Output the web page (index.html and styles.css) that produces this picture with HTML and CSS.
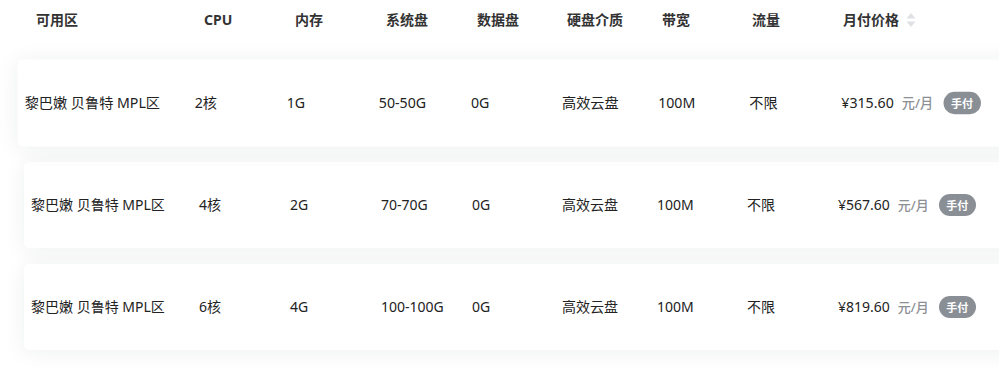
FILE: index.html
```html
<!DOCTYPE html>
<html lang="zh-CN">
<head>
<meta charset="utf-8">
<title>价格表</title>
<link rel="stylesheet" href="styles.css">
</head>
<body>
<div class="table">
  <div class="thead">
    <div class="th">可用区</div>
    <div class="th">CPU</div>
    <div class="th">内存</div>
    <div class="th">系统盘</div>
    <div class="th">数据盘</div>
    <div class="th">硬盘介质</div>
    <div class="th">带宽</div>
    <div class="th">流量</div>
    <div class="th th-sort">月付价格
      <svg class="sort" width="10" height="16" viewBox="0 0 10 16"><path d="M5 1 L9.5 6.5 H0.5 Z" fill="#dfe1e5"/><path d="M5 15 L9.5 9.5 H0.5 Z" fill="#dfe1e5"/></svg>
    </div>
  </div>
  <div class="tbody">
    <div class="row is-hover">
      <div class="td">黎巴嫩 贝鲁特 MPL区</div>
      <div class="td">2核</div>
      <div class="td">1G</div>
      <div class="td">50-50G</div>
      <div class="td">0G</div>
      <div class="td">高效云盘</div>
      <div class="td">100M</div>
      <div class="td">不限</div>
      <div class="td price"><span class="amount">¥315.60</span><span class="unit">元/月</span><span class="badge">手付</span></div>
    </div>
    <div class="row">
      <div class="td">黎巴嫩 贝鲁特 MPL区</div>
      <div class="td">4核</div>
      <div class="td">2G</div>
      <div class="td">70-70G</div>
      <div class="td">0G</div>
      <div class="td">高效云盘</div>
      <div class="td">100M</div>
      <div class="td">不限</div>
      <div class="td price"><span class="amount">¥567.60</span><span class="unit">元/月</span><span class="badge">手付</span></div>
    </div>
    <div class="row">
      <div class="td">黎巴嫩 贝鲁特 MPL区</div>
      <div class="td">6核</div>
      <div class="td">4G</div>
      <div class="td">100-100G</div>
      <div class="td">0G</div>
      <div class="td">高效云盘</div>
      <div class="td">100M</div>
      <div class="td">不限</div>
      <div class="td price"><span class="amount">¥819.60</span><span class="unit">元/月</span><span class="badge">手付</span></div>
    </div>
  </div>
</div>
</body>
</html>
```
FILE: styles.css
```css
html, body {
  margin: 0;
  padding: 0;
  background: #fff;
  overflow: hidden;
}
body {
  font-family: "Noto Sans", "Noto Sans CJK SC", sans-serif;
  font-size: 14px;
  color: #333;
}
.table {
  width: 100%;
  overflow: hidden;
}
.thead, .row {
  display: grid;
  grid-template-columns: 168px 91px 91px 91px 90px 95px 90px 91px 1fr;
  width: 1076px;
}
.thead {
  height: 40px;
  margin-left: 29px;
  align-items: center;
  font-weight: 700;
  color: #333;
}
.th, .td {
  padding-left: 7px;
  line-height: 20px;
  white-space: nowrap;
}
.th-sort {
  display: flex;
  align-items: center;
  gap: 7px;
}
.sort { display: block; }
.tbody {
  display: flex;
  flex-direction: column;
  gap: 16px;
  padding: 20px 0 24px 24px;
}
.row {
  height: 86px;
  align-items: center;
  background: #fff;
  border-radius: 5px;
  box-shadow: 0 2px 22px rgba(30, 40, 60, 0.07);
  color: #222;
}
.row.is-hover {
  transform: scale(1.012);
}
.price {
  display: flex;
  align-items: center;
}
.amount { margin-right: 8px; }
.unit {
  color: #8c8f94;
  font-size: 13px;
  font-weight: 500;
  margin-right: 10px;
}
.badge {
  display: inline-flex;
  align-items: center;
  justify-content: center;
  width: 37px;
  height: 22px;
  border-radius: 11px;
  background: #8a8f96;
  color: #fff;
  font-size: 11px;
  font-weight: 700;
  line-height: 1;
}
```
